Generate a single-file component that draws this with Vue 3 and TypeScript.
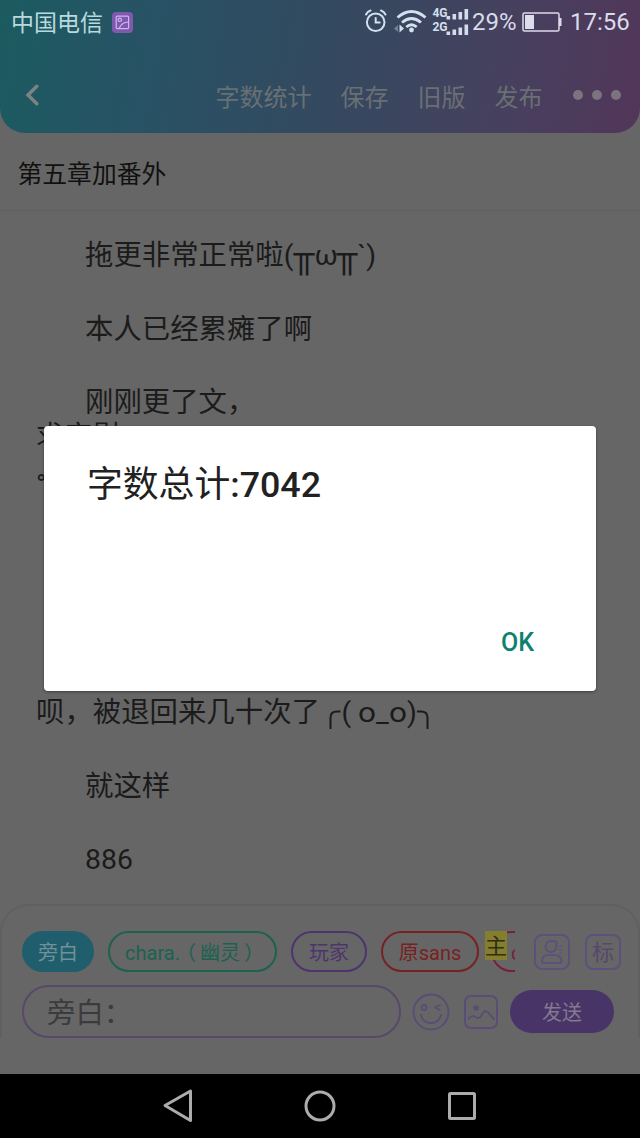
<script setup lang="ts">
interface Line {
  text: string
  indent?: boolean
  gap?: boolean
}

interface Chip {
  label: string
  kind: string
  note?: string
}

const menu: string[] = ['字数统计', '保存', '旧版', '发布']

const lines: Line[] = [
  { text: '本人已经累瘫了啊', indent: true, gap: true },
  { text: '刚刚更了文，', indent: true },
]

const tail: Line[] = [
  { text: '就这样', indent: true, gap: true },
  { text: '886', indent: true },
]

const chips: Chip[] = [
  { label: '旁白', kind: 'narrator' },
  { label: 'chara.', kind: 'chara', note: '幽灵' },
  { label: '玩家', kind: 'player' },
  { label: '原sans', kind: 'sans' },
]
</script>

<template>
  <div class="screen">
    <header class="header">
      <div class="status">
        <span class="carrier">中国电信</span>
        <svg class="badge" width="21" height="21" viewBox="0 0 21 21">
          <rect width="21" height="21" rx="4" fill="#7e59ad" />
          <g fill="none" stroke="#d3b5ee" stroke-width="1.2">
            <rect x="4.2" y="4.2" width="12.4" height="12.4" rx="1" />
            <circle cx="7.8" cy="7.8" r="1.7" />
            <path d="M7 16.5C9.5 11.5 12 10.5 16.5 10" />
          </g>
        </svg>
        <svg class="indicators" width="110" height="36" viewBox="360 4 110 36">
          <g fill="none" stroke="#d3e0ef" stroke-width="2" stroke-linecap="round">
            <circle cx="375.7" cy="22.3" r="8.8" />
            <path d="M375.7 18v4.500h4M366 14.500q1.500-3 4.500-4M385.500 14.500q-1.500-3-4.500-4" />
          </g>
          <g fill="none" stroke="#d3e0ef" stroke-width="2.8">
            <path d="M397.500 17.500Q411.500 5.500 425.500 17.500" />
            <path d="M402 22.500Q411.500 14.500 421 22.500" />
            <path d="M406.300 27Q411.500 22.500 416.700 27" />
          </g>
          <circle cx="411.500" cy="30" r="2.400" fill="#d3e0ef" />
          <path d="M394 28.500l4-3.500v7z" fill="#71819a" />
          <path d="M404 28.500l-4.500-4v8z" fill="#d3e0ef" />
          <text x="432.500" y="16.500" class="net" textLength="15">4G</text>
          <text x="432.500" y="30.800" class="net" textLength="15">2G</text>
          <g fill="#d3dceb">
            <rect x="446.500" y="16" width="3.600" height="3.500" />
            <rect x="452.500" y="14" width="3.600" height="5.500" />
            <rect x="458.500" y="12" width="3.600" height="7.500" />
            <rect x="464.500" y="9" width="3.600" height="10.500" />
            <rect x="446.500" y="31.500" width="3.600" height="3.500" />
            <rect x="452.500" y="29.500" width="3.600" height="5.500" />
            <rect x="458.500" y="27.500" width="3.600" height="7.500" />
            <rect x="464.500" y="24.500" width="3.600" height="10.500" />
          </g>
        </svg>
        <span class="percent">29%</span>
        <svg class="battery" width="40" height="21" viewBox="0 0 40 21">
          <rect x="1" y="1" width="36" height="18" rx="1.500" fill="none" stroke="#dcdcea" stroke-width="1.500" />
          <rect x="3" y="3" width="9" height="14" fill="#dcdcea" />
          <rect x="37" y="6" width="2.500" height="8" fill="#dcdcea" />
        </svg>
        <span class="clock">17:56</span>
      </div>
      <nav class="toolbar">
        <svg class="back" width="14" height="22" viewBox="0 0 14 22">
          <path d="M11.800 2.200L3 11L11.800 19.800" fill="none" stroke="#7d8282" stroke-width="3.400" stroke-linecap="round" />
        </svg>
        <div class="menu">
          <span v-for="item in menu" :key="item">{{ item }}</span>
        </div>
        <div class="more"><i></i><i></i><i></i></div>
      </nav>
    </header>

    <h1 class="chapter">第五章加番外</h1>

    <main class="text">
      <p class="indent gap">拖更非常正常啦(<span class="tear">╥</span><span class="mouth">ω</span><span class="tear">╥</span>`)</p>
      <p v-for="line in lines" :key="line.text" :class="{ indent: line.indent, gap: line.gap }">{{ line.text }}</p>
      <p class="plea">求安慰</p>
      <p class="degree">°;</p>
      <p class="returned">呗，被退回来几十次了<svg width="112" height="37" viewBox="0 0 112 37">
        <g fill="none" stroke="#1b1b1b" stroke-width="2">
          <path d="M10.500 34V22.500Q10.500 16.500 17 16.500H20.500" />
          <path d="M97 16.500H101Q107.500 16.500 107.500 22.500V34" />
        </g>
        <text x="21.500" y="27" class="face">(</text>
        <text x="38" y="27" class="face" textLength="18" lengthAdjust="spacingAndGlyphs">o</text>
        <text x="56" y="27" class="face">_</text>
        <text x="69" y="27" class="face" textLength="18" lengthAdjust="spacingAndGlyphs">o</text>
        <text x="87" y="27" class="face">)</text>
      </svg></p>
      <p v-for="line in tail" :key="line.text" :class="{ indent: line.indent, gap: line.gap }">{{ line.text }}</p>
    </main>

    <section class="composer">
      <div class="row roles">
        <div class="chips">
          <span v-for="chip in chips" :key="chip.kind" class="chip" :class="chip.kind">{{ chip.label }}<template v-if="chip.note"><span class="open">（</span>{{ chip.note }}<span class="close">）</span></template></span>
          <span class="chip next">c</span>
          <b class="lead">主</b>
        </div>
        <svg class="person" width="36" height="36" viewBox="0 0 36 36">
          <g fill="none" stroke="#5e4f7c" stroke-width="1.900">
            <rect x="1" y="1" width="34" height="34" rx="7" />
            <path d="M22.500 7.500V12.500A5.500 5.500 0 1 1 17 7Z" stroke-linejoin="round" />
            <path d="M8 28V26.500Q9 21 14 21H21Q26.500 21 27.500 26.500V28Q27.500 29 26 29H9.500Q8 29 8 28Z" />
            <path d="M25 12H28M25 15.500H28M25 19H28" stroke-width="1" />
          </g>
        </svg>
        <span class="tag">标</span>
      </div>
      <div class="row entry">
        <div class="field">旁白：</div>
        <svg class="smile" width="38" height="38" viewBox="0 0 38 38">
          <g fill="none" stroke="#5a4c76" stroke-width="1.900" stroke-linecap="round">
            <circle cx="19" cy="19" r="17.500" />
            <circle cx="12" cy="14.500" r="2.500" />
            <path d="M28 12L23 14.500L28 17" stroke-width="1.500" />
            <path d="M9 22Q11 30 19 30T29 22" />
          </g>
        </svg>
        <svg class="photo" width="34" height="34" viewBox="0 0 34 34">
          <g fill="none" stroke="#5a4c76" stroke-width="1.900" stroke-linecap="round">
            <rect x="1" y="1" width="32" height="32" rx="6" />
            <path d="M4.500 24Q8 19.500 11.500 22T17 21Q21 13.500 24 17.500L30 24" />
          </g>
          <circle cx="12" cy="13" r="2.800" fill="#5a4c76" />
        </svg>
        <button class="send">发送</button>
      </div>
    </section>

    <footer class="navbar">
      <svg width="32" height="36" viewBox="0 0 32 36"><path d="M3 17.500L28.500 3V32.500Z" fill="none" stroke="#acacac" stroke-width="3" stroke-linejoin="round" /></svg>
      <svg width="32" height="36" viewBox="0 0 32 36"><circle cx="16" cy="18" r="14" fill="none" stroke="#acacac" stroke-width="3" /></svg>
      <svg width="32" height="36" viewBox="0 0 32 36"><rect x="3.500" y="5.500" width="25" height="25" rx="1" fill="none" stroke="#acacac" stroke-width="3" /></svg>
    </footer>

    <div class="dialog">
      <div class="total">字数总计<b>:7042</b></div>
      <button class="ok">OK</button>
    </div>
  </div>
</template>

<style>
body {
  margin: 0;
  background: #666;
}
</style>

<style scoped>
.screen {
  position: relative;
  display: flex;
  flex-direction: column;
  width: 640px;
  height: 1138px;
  overflow: hidden;
  background: #666;
  color: #1b1b1b;
  font-family: Roboto, "Noto Sans CJK SC", sans-serif;
}
svg { display: block; flex: none; }
p, h1 { margin: 0; font-weight: 400; white-space: nowrap; }
button { border: 0; padding: 0; font: inherit; }
.header {
  height: 133px;
  flex: none;
  border-radius: 0 0 25px 25px;
  background: linear-gradient(100deg, #1b5b60 0%, #285265 24%, #34495f 52%, #45415f 76%, #523659 100%);
}
.status {
  display: flex;
  align-items: center;
  height: 44px;
  padding-left: 11px;
  color: #d8dce9;
  font-size: 24px;
}
.carrier { width: 101px; margin-top: -3px; font-size: 23px; color: #b8d9df; }
.indicators { margin-left: 227px; }
.net { font: 700 12px Roboto, sans-serif; fill: #d3e0ef; }
.percent { margin-left: 2px; width: 50px; }
.battery { margin-top: 1px; }
.clock { margin-left: 8px; }
.toolbar {
  display: flex;
  align-items: center;
  height: 104px;
  margin-top: -1px;
  padding: 0 18px 0 25px;
}
.menu {
  display: flex;
  gap: 29px;
  margin-left: 176.500px;
  color: #697074;
  font-size: 24px;
}
.more { display: flex; gap: 9px; margin-left: 30.500px; }
.more i { width: 10px; height: 10px; border-radius: 50%; background: #7b747e; }
.chapter {
  flex: none;
  height: 77px;
  padding-left: 17.500px;
  border-bottom: 1px solid #606060;
  font-size: 24.800px;
  line-height: 83px;
  color: #111;
}
.text {
  height: 693px;
  flex: none;
  box-sizing: border-box;
  padding: 27px 0 0 36px;
  font-size: 28.400px;
}
.text p { height: 36.800px; line-height: 36.800px; }
.text .indent { padding-left: 49px; }
.text .gap { margin-bottom: 36.800px; }
.text .plea { margin-top: -3px; }
.text .degree { margin-top: 11px; }
.text .returned { display: flex; margin-top: 191px; margin-bottom: 37.500px; }
.tear {
  display: inline-block;
  width: 21px;
  font-family: "Liberation Mono", monospace;
  font-size: 35px;
  line-height: 0;
}
.mouth { display: inline-block; width: 22px; text-align: center; }
.face { font: 28.300px Roboto, sans-serif; fill: #1b1b1b; }
.composer {
  height: 134px;
  flex: none;
  box-sizing: border-box;
  border: 2px solid #606060;
  border-bottom: 0;
  border-radius: 28px 28px 0 0;
  margin-bottom: 36px;
}
.row { display: flex; align-items: center; }
.roles { height: 41px; margin-top: 25px; padding-left: 20px; }
.chips { position: relative; display: flex; gap: 14px; width: 493px; height: 41px; overflow: hidden; }
.chip {
  flex: none;
  box-sizing: border-box;
  height: 41px;
  border: 2px solid;
  border-radius: 21px;
  font-size: 20px;
  line-height: 40px;
  text-align: center;
  white-space: nowrap;
}
.narrator { width: 72px; background: #215e6d; border-color: #215e6d; color: #6f9299; }
.chara { width: 169px; color: #1b6250; }
.open { margin: 0 4px 0 -4px; }
.close { margin: 0 -4px 0 4px; }
.player { width: 76px; color: #4e346c; }
.sans { width: 98px; color: #782122; }
.next { width: 90px; margin-left: -2px; padding-left: 18px; color: #78203a; text-align: left; }
.lead {
  position: absolute;
  left: 463px;
  top: 0;
  width: 22px;
  height: 29px;
  background: #857e2e;
  color: #303010;
  font-size: 22px;
  font-weight: 400;
  line-height: 32px;
  text-align: center;
}
.person { margin-left: 19px; }
.tag {
  box-sizing: border-box;
  width: 36px;
  height: 36px;
  margin-left: 15px;
  border: 2px solid #5e4f7c;
  border-radius: 8px;
  color: #57486c;
  font-size: 22px;
  line-height: 33px;
  text-align: center;
}
.entry { height: 53px; margin-top: 13px; padding-left: 20px; }
.field {
  box-sizing: border-box;
  width: 379px;
  height: 53px;
  padding-left: 23px;
  border: 2px solid #57486c;
  border-radius: 27px;
  color: #3b3b3b;
  font-size: 28.400px;
  line-height: 54px;
}
.smile { margin-left: 11px; }
.photo { margin-left: 14px; }
.send {
  width: 104px;
  height: 43px;
  margin-left: 12px;
  border-radius: 22px;
  background: #493468;
  color: #84798f;
  font-size: 20px;
}
.navbar {
  display: flex;
  justify-content: center;
  gap: 110px;
  flex: none;
  height: 64px;
  box-sizing: border-box;
  padding-top: 14px;
  background: #000;
}
.dialog {
  position: absolute;
  left: 44px;
  top: 426px;
  width: 551.500px;
  height: 264.500px;
  box-sizing: border-box;
  padding: 32px 56.500px 0 43px;
  border-radius: 4px;
  background: #fff;
  box-shadow: 0 1px 3px rgba(0, 0, 0, 0.400);
  display: flex;
  flex-direction: column;
}
.total { height: 52px; line-height: 54px; font-size: 35.800px; color: #212121; }
.total b { font-weight: 500; }
.ok {
  align-self: flex-end;
  margin: 116px 5px 0 0;
  height: 32px;
  background: none;
  color: #0c8170;
  font-size: 25px;
  font-weight: 500;
}
</style>
